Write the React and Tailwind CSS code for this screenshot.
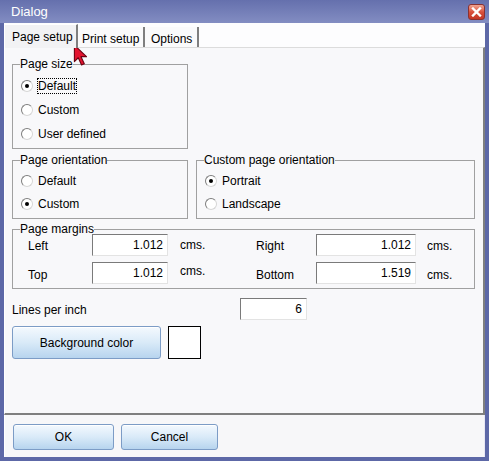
import React from "react";

const Radio = ({ label, checked, focus, h = "h-[24px]" }) => (
  <div className={`flex items-center ${h}`}>
    <span className="w-[12px] h-[12px] rounded-full border border-t-[#7d7d7d] border-l-[#7d7d7d] border-b-[#d6d6d6] border-r-[#d6d6d6] bg-white flex items-center justify-center">
      {checked && <span className="w-[4px] h-[4px] rounded-full bg-black" />}
    </span>
    <span
      className={`ml-[4px] leading-[14px] ${
        focus ? "border border-dotted border-black" : "border border-transparent"
      }`}
    >
      {label}
    </span>
  </div>
);

const Field = ({ value, w }) => (
  <div
    className={`${w} h-[22px] bg-white border border-t-[#7a7a7a] border-l-[#7a7a7a] border-b-[#e3e3e3] border-r-[#e3e3e3] flex items-center justify-end pr-[4px]`}
  >
    {value}
  </div>
);

const Button = ({ children, className }) => (
  <button
    className={`${className} rounded-[3px] border border-[#7c9cc6] bg-linear-to-b from-[#f4f9fe] via-[#d9eaf8] to-[#b7d4ee] shadow-[inset_0_1px_0_#ffffff] flex items-center justify-center`}
  >
    {children}
  </button>
);

const App = () => {
  return (
    <div className="relative w-[489px] h-[461px] bg-[#5d68a7] flex flex-col overflow-hidden text-[12px] text-black font-['Liberation_Sans',Arial,sans-serif]">
      {/* Title bar */}
      <div className="h-[23px] flex items-center justify-between pl-[11px] pr-[4px] bg-linear-to-b from-[#6570ad] to-[#838dc2]">
        <span className="text-white text-[13px]">Dialog</span>
        <div className="w-[17px] h-[16px] rounded-[3px] border border-[#8a3232] bg-linear-to-b from-[#f0a592] via-[#d8503c] to-[#c43725] flex items-center justify-center">
          <svg width="11" height="10" viewBox="0 0 11 10">
            <path d="M2 1.5 L9 8.5 M9 1.5 L2 8.5" stroke="#ffffff" strokeWidth="2.4" strokeLinecap="square" />
          </svg>
        </div>
      </div>

      <div className="flex-1 flex flex-col mx-[4px] mb-[4px] bg-[#f7f7f9]">
        {/* Tabs */}
        <div className="h-[24px] bg-[#fdfdfe] flex items-end">
          <div className="w-[74px] h-[24px] -mb-[1px] z-10 bg-[#f2f2f4] border-l border-t border-l-white border-t-white border-r-2 border-r-[#7f7f7f] pl-[7px] pt-[3px]">
            Page setup
          </div>
          <div className="w-[67px] h-[20px] bg-[#fafafb] border-r-2 border-r-[#7f7f7f] pl-[4px] pt-[3px]">
            Print setup
          </div>
          <div className="w-[54px] h-[20px] bg-[#fafafb] border-r-2 border-r-[#7f7f7f] pl-[6px] pt-[3px]">
            Options
          </div>
        </div>

        {/* Panel */}
        <div className="flex-1 flex flex-col bg-[#f8f8fa] border-l border-l-white border-t border-t-[#dcdcdc] border-r-2 border-r-[#7f7f7f] border-b-2 border-b-[#7f7f7f] pl-[7px] pt-[9px]">
          <fieldset className="w-[176px] border border-[#a0a0a0] pl-[8px] pb-[2px]">
            <legend className="-ml-[1px] leading-[14px]">Page size</legend>
            <div className="mt-[3px]">
              <Radio label="Default" checked focus />
              <Radio label="Custom" />
              <Radio label="User defined" />
            </div>
          </fieldset>

          <div className="flex gap-[8px] mt-[4px]">
            <fieldset className="w-[176px] border border-[#a0a0a0] pl-[8px] pb-[3px]">
              <legend className="-ml-[1px] leading-[14px]">Page orientation</legend>
              <div className="mt-[2px]">
                <Radio label="Default" h="h-[23px]" />
                <Radio label="Custom" checked h="h-[23px]" />
              </div>
            </fieldset>
            <fieldset className="w-[279px] border border-[#a0a0a0] pl-[8px] pb-[3px]">
              <legend className="-ml-[1px] leading-[14px]">Custom page orientation</legend>
              <div className="mt-[2px]">
                <Radio label="Portrait" checked h="h-[23px]" />
                <Radio label="Landscape" h="h-[23px]" />
              </div>
            </fieldset>
          </div>

          <fieldset className="w-[463px] mt-[3px] border border-[#a0a0a0] pl-[15px] pb-[4px]">
            <legend className="-ml-[8px] leading-[14px]">Page margins</legend>
            <div className="-mt-[2px] flex flex-col gap-[6px]">
              <div className="flex items-center h-[22px]">
                <span className="w-[64px] pt-[2px]">Left</span>
                <Field value="1.012" w="w-[76px]" />
                <span className="w-[88px] pl-[12px]">cms.</span>
                <span className="w-[60px] pt-[2px]">Right</span>
                <Field value="1.012" w="w-[100px]" />
                <span className="pl-[11px] pt-[2px]">cms.</span>
              </div>
              <div className="flex items-center h-[22px]">
                <span className="w-[64px] pt-[4px]">Top</span>
                <Field value="1.012" w="w-[76px]" />
                <span className="w-[88px] pl-[12px] -mt-[4px]">cms.</span>
                <span className="w-[60px] pt-[3px]">Bottom</span>
                <Field value="1.519" w="w-[100px]" />
                <span className="pl-[11px] pt-[3px]">cms.</span>
              </div>
            </div>
          </fieldset>

          <div className="flex items-center h-[22px] mt-[9px]">
            <span className="w-[228px] pt-[2px]">Lines per inch</span>
            <Field value="6" w="w-[67px]" />
          </div>

          <div className="flex items-center gap-[7px] mt-[6px]">
            <Button className="w-[149px] h-[33px] text-[12px]">Background color</Button>
            <div className="w-[33px] h-[33px] bg-white border border-black" />
          </div>
        </div>

        {/* Footer */}
        <div className="h-[42px] flex items-start gap-[7px] pl-[8px] pt-[9px] border-l border-r border-l-white border-r-[#e8e8f4]">
          <Button className="w-[101px] h-[26px]">OK</Button>
          <Button className="w-[97px] h-[26px]">Cancel</Button>
        </div>
      </div>

      {/* Mouse cursor */}
      <svg className="absolute left-[73px] top-[44px]" width="16" height="22" viewBox="0 0 14 20">
        <path
          d="M1 1 L1 16 L4.5 12.5 L7.5 19 L10 18 L7 11.5 L12 11.5 Z"
          fill="#e3132f"
          stroke="#6b0010"
          strokeWidth="1"
          strokeLinejoin="round"
        />
      </svg>
    </div>
  );
};

export default App;
